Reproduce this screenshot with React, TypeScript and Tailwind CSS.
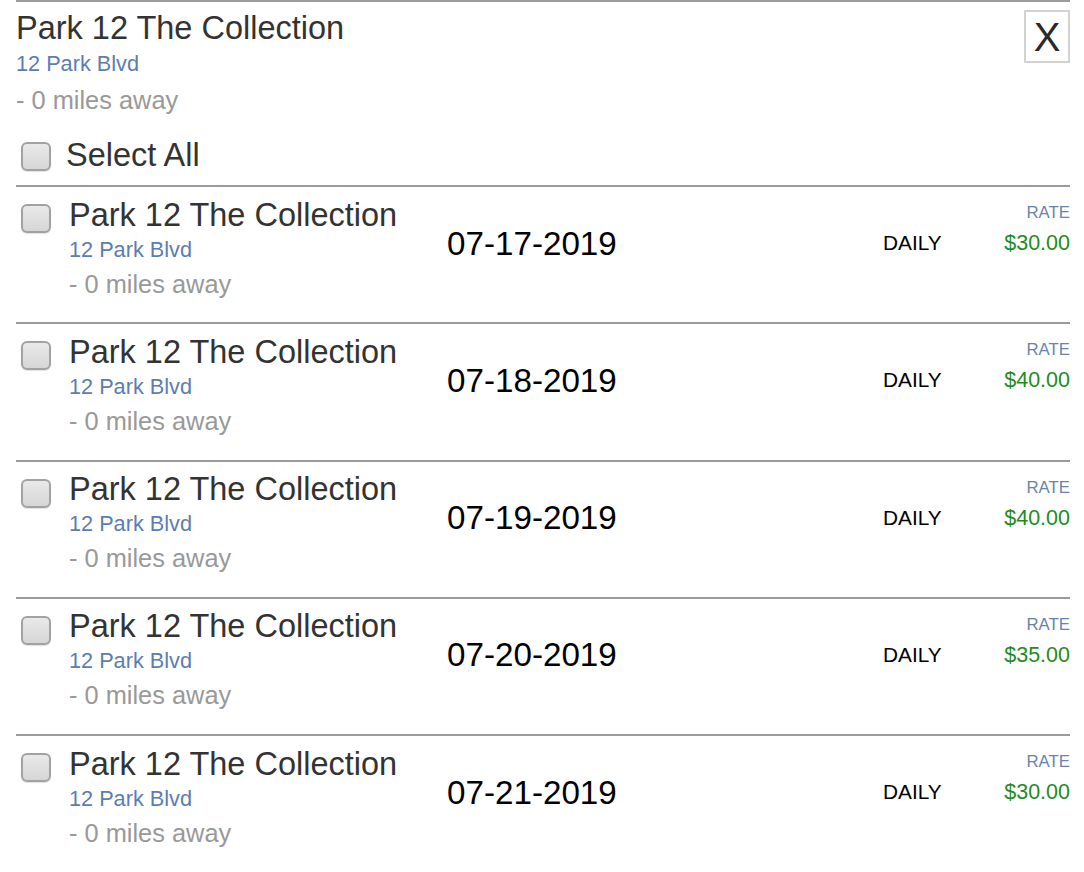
import React from "react";

type Slot = {
  date: string;
  price: string;
};

const slots: Slot[] = [
  { date: "07-17-2019", price: "$30.00" },
  { date: "07-18-2019", price: "$40.00" },
  { date: "07-19-2019", price: "$40.00" },
  { date: "07-20-2019", price: "$35.00" },
  { date: "07-21-2019", price: "$30.00" },
];

function Box({ className = "" }: { className?: string }) {
  return (
    <input
      type="checkbox"
      className={`appearance-none shrink-0 w-[30px] h-[29px] rounded-[6px] border-2 border-[#a2a2a2] bg-gradient-to-b from-[#e9e9e9] to-[#d6d6d6] shadow-[0_1px_1px_rgba(0,0,0,0.12)] ${className}`}
    />
  );
}

function SlotRow({ slot }: { slot: Slot }) {
  return (
    <div className="flex items-start h-[137.25px] border-t-2 border-[#9b9b9b]">
      <Box className="ml-[5px] mt-[17px]" />
      <div className="ml-[18px] w-[378px] pt-[10.5px]">
        <div className="text-[32.5px] leading-[34px] text-[#333]">Park 12 The Collection</div>
        <div className="text-[21.7px] leading-[35px] text-[#5b7db1]">12 Park Blvd</div>
        <div className="text-[25.4px] leading-[35px] text-[#999]">- 0 miles away</div>
      </div>
      <div className="w-[436px] pt-[38.5px] text-[33.2px] leading-[36px] text-black">{slot.date}</div>
      <div className="pt-[44px] text-[20.8px] leading-[24px] text-black">DAILY</div>
      <div className="ml-auto pt-[16px] text-right">
        <div className="text-[16.8px] leading-[20px] text-[#6a82ae]">RATE</div>
        <div className="mt-[7px] text-[21.5px] leading-[26px] text-[#1e8c1e]">{slot.price}</div>
      </div>
    </div>
  );
}

export default function App() {
  return (
    <div className="min-h-[872px] bg-white pl-4 pr-[14px] font-['Liberation_Sans',Arial,sans-serif]">
      <div className="border-t-2 border-[#9b9b9b]">
        <div className="flex items-start justify-between pt-2">
          <div>
            <div className="text-[32.5px] leading-[36px] text-[#333]">Park 12 The Collection</div>
            <div className="text-[21.7px] leading-[36px] text-[#5b7db1]">12 Park Blvd</div>
            <div className="text-[25.4px] leading-[36px] text-[#999]">- 0 miles away</div>
          </div>
          <button className="w-[46px] h-[53px] border-2 border-[#d2d2d2] bg-white text-[40px] leading-none text-[#2a2a2a] flex items-center justify-center">
            X
          </button>
        </div>
        <div className="flex items-start mt-[19px] mb-[12px]">
          <Box className="ml-[5px] mt-[5px]" />
          <span className="ml-[15px] text-[32.5px] leading-[36px] text-[#333]">Select All</span>
        </div>
        {slots.map((s) => (
          <SlotRow key={s.date} slot={s} />
        ))}
      </div>
    </div>
  );
}
